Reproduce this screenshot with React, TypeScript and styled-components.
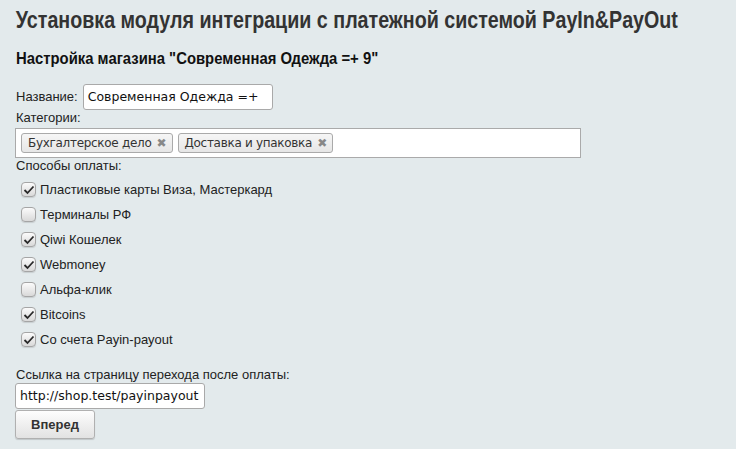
import React from "react";
import styled, { createGlobalStyle } from "styled-components";

const Global = createGlobalStyle`
  html, body { margin: 0; padding: 0; }
  body {
    background: #e3eaec;
    font-family: "Liberation Sans", Arial, sans-serif;
    color: #111;
  }
`;

const Page = styled.div`
  width: 736px;
  height: 449px;
  box-sizing: border-box;
  padding: 6px 15px 0 15px;
  background: #e3eaec;
  overflow: hidden;
`;

const Title = styled.h1`
  margin: 0;
  font-family: "Liberation Sans", Arial, sans-serif;
  font-weight: bold;
  font-size: 23px;
  line-height: 28px;
  color: #333;
  padding-left: 1px;
  white-space: nowrap;
  transform: scaleX(0.855);
  transform-origin: left center;
`;

const SubTitle = styled.h2`
  margin: 15px 0 0 1px;
  font-family: "Liberation Sans", Arial, sans-serif;
  font-weight: bold;
  font-size: 16px;
  line-height: 20px;
  color: #111;
  white-space: nowrap;
  transform: scaleX(0.928);
  transform-origin: left center;
`;

const Label = styled.div`
  font-size: 13px;
  line-height: 16px;
  color: #222;
  padding-left: 1px;
`;

const Row = styled.div`
  display: flex;
  align-items: center;
  gap: 5px;
  margin-top: 15px;
`;

const TextInput = styled.div<{ $w: number }>`
  box-sizing: border-box;
  width: ${(p) => p.$w}px;
  height: 26px;
  background: #fff;
  border: 1px solid #a9a9a9;
  border-radius: 3px;
  font-family: "DejaVu Sans", sans-serif;
  font-size: 12.5px;
  line-height: 24px;
  padding: 0 4px;
  color: #111;
  white-space: nowrap;
  overflow: hidden;
`;

const TagBox = styled.div`
  box-sizing: border-box;
  width: 566px;
  height: 30px;
  background: #fff;
  border: 1px solid #aaa;
  display: flex;
  align-items: center;
  gap: 5px;
  padding: 0 5px;
  margin-top: 2px;
`;

const Tag = styled.div`
  box-sizing: border-box;
  height: 20px;
  display: flex;
  align-items: center;
  gap: 5px;
  padding: 0 5px 0 6px;
  border: 1px solid #aaa;
  border-radius: 3px;
  background: linear-gradient(#f6f6f6, #e6e6e6);
  font-family: "DejaVu Sans", sans-serif;
  font-size: 12px;
  letter-spacing: -0.3px;
  color: #333;
`;

const Close = styled.span`
  font-size: 12px;
  color: #888;
  font-weight: bold;
  letter-spacing: 0;
`;

const CheckList = styled.div`
  display: flex;
  flex-direction: column;
  margin-top: 3px;
`;

const CheckRow = styled.div`
  display: flex;
  align-items: center;
  height: 25px;
  padding-left: 6px;
  gap: 4px;
  font-size: 13px;
  color: #222;
`;

const Box = styled.span`
  box-sizing: border-box;
  width: 15px;
  height: 15px;
  border: 1px solid #a5a5a5;
  border-radius: 4px;
  background: linear-gradient(#fbfbfb, #d9d9d9);
  display: flex;
  align-items: center;
  justify-content: center;
  box-shadow: 0 1px 1px rgba(0, 0, 0, 0.12);
`;

const LinkLabel = styled(Label)`
  margin-top: 15px;
`;

const Button = styled.div`
  box-sizing: border-box;
  width: 80px;
  height: 29px;
  margin-top: 1px;
  border: 1px solid #b0b0b0;
  border-radius: 3px;
  background: linear-gradient(#fdfdfd, #e2e2e2);
  box-shadow: 0 1px 1px rgba(0, 0, 0, 0.15);
  font-family: "Liberation Sans", Arial, sans-serif;
  font-weight: bold;
  font-size: 13px;
  color: #333;
  display: flex;
  align-items: center;
  justify-content: center;
`;

const Check = () => (
  <svg width="12" height="10" viewBox="0 0 12 10">
    <path d="M1.5 5 L4.5 8 L10.5 1.5" fill="none" stroke="#2a2a2a" strokeWidth="1.8" />
  </svg>
);

const items: [string, boolean][] = [
  ["Пластиковые карты Виза, Мастеркард", true],
  ["Терминалы РФ", false],
  ["Qiwi Кошелек", true],
  ["Webmoney", true],
  ["Альфа-клик", false],
  ["Bitcoins", true],
  ["Со счета Payin-payout", true],
];

export default function App() {
  return (
    <Page>
      <Global />
      <Title>Установка модуля интеграции с платежной системой PayIn&amp;PayOut</Title>
      <SubTitle>Настройка магазина "Современная Одежда =+ 9"</SubTitle>
      <Row>
        <Label>Название:</Label>
        <TextInput $w={190}>Современная Одежда =+</TextInput>
      </Row>
      <Label>Категории:</Label>
      <TagBox>
        <Tag>Бухгалтерское дело <Close>✖</Close></Tag>
        <Tag>Доставка и упаковка <Close>✖</Close></Tag>
      </TagBox>
      <Label>Способы оплаты:</Label>
      <CheckList>
        {items.map(([t, c]) => (
          <CheckRow key={t}>
            <Box>{c && <Check />}</Box>
            {t}
          </CheckRow>
        ))}
      </CheckList>
      <LinkLabel>Ссылка на страницу перехода после оплаты:</LinkLabel>
      <TextInput $w={190}>http://shop.test/payinpayout</TextInput>
      <Button>Вперед</Button>
    </Page>
  );
}
